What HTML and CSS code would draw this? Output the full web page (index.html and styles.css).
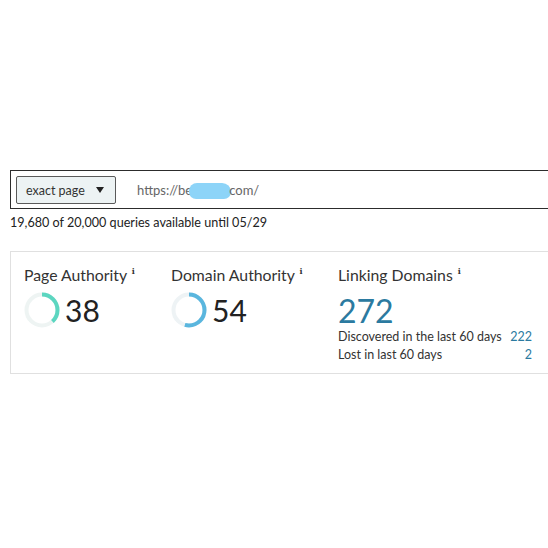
FILE: index.html
```html
<!DOCTYPE html>
<html>
<head>
<meta charset="utf-8">
<link rel="stylesheet" href="styles.css">
</head>
<body>
<div class="page">
  <div class="search">
    <button class="scope">exact page <span class="caret"></span></button>
    <div class="url">https://be<span class="blob"></span>com/</div>
  </div>
  <div class="quota">19,680 of 20,000 queries available until 05/29</div>
  <div class="card">
    <div class="metric">
      <div class="title">Page Authority <sup>i</sup></div>
      <div class="score">
        <svg class="ring" width="36" height="36" viewBox="0 0 36 36">
          <circle cx="18" cy="18" r="15.5" fill="none" stroke="#eef4f3" stroke-width="4"/>
          <circle cx="18" cy="18" r="15.5" fill="none" stroke="#5cd6c0" stroke-width="4" stroke-dasharray="37 100" transform="rotate(-90 18 18)"/>
        </svg>
        <span class="num">38</span>
      </div>
    </div>
    <div class="metric">
      <div class="title">Domain Authority <sup>i</sup></div>
      <div class="score">
        <svg class="ring" width="36" height="36" viewBox="0 0 36 36">
          <circle cx="18" cy="18" r="15.5" fill="none" stroke="#eef3f5" stroke-width="4"/>
          <circle cx="18" cy="18" r="15.5" fill="none" stroke="#5ab6de" stroke-width="4" stroke-dasharray="52.6 100" transform="rotate(-90 18 18)"/>
        </svg>
        <span class="num">54</span>
      </div>
    </div>
    <div class="metric linking">
      <div class="title">Linking Domains <sup>i</sup></div>
      <div class="big">272</div>
      <div class="row"><span>Discovered in the last 60 days</span><span class="val">222</span></div>
      <div class="row"><span>Lost in last 60 days</span><span class="val">2</span></div>
    </div>
  </div>
</div>
</body>
</html>
```
FILE: styles.css
```css
* { box-sizing: border-box; }
html, body { margin: 0; background: #fff; }
body { font-family: Lato, "Noto Sans", sans-serif; color: #222; }
.page { padding: 170px 0 0 10px; }
.search {
  display: flex;
  align-items: center;
  height: 39px;
  border: 1px solid #2c2c2c;
  border-right: none;
  padding: 5px 0 4px 5px;
  margin-right: -2px;
}
.scope {
  display: flex;
  align-items: center;
  width: 100px;
  height: 28px;
  padding: 0 0 0 9px;
  background: #edf3f4;
  border: 1px solid #5a5a5a;
  border-radius: 2px;
  font-family: Lato, sans-serif;
  font-size: 12.5px;
  color: #333;
}
.caret {
  margin-left: 11px;
  width: 0; height: 0;
  border-left: 4.5px solid transparent;
  border-right: 4.5px solid transparent;
  border-top: 6px solid #222;
}
.url {
  margin-left: 21px;
  font-size: 13px;
  color: #666;
  display: flex;
  align-items: center;
}
.blob {
  display: inline-block;
  width: 42px;
  height: 16px;
  margin: 1px -2px 0 -3px;
  background: #8dd4f8;
  border-radius: 9px 10px 8px 8px;
}
.quota {
  font-size: 12.6px;
  color: #222;
  margin-top: 6px;
  line-height: 16px;
}
.card {
  margin-top: 20px;
  height: 123px;
  border: 1px solid #e0e0e0;
  border-right: none;
  margin-right: -2px;
  padding: 9px 0 0 13px;
  display: grid;
  grid-template-columns: 147px 167px 194px;
}
.title {
  font-size: 15.8px;
  color: #333;
  line-height: 20px;
  white-space: nowrap;
}
.title sup {
  font-family: "DejaVu Serif", serif;
  font-size: 8px;
  font-weight: bold;
  vertical-align: 7px;
  margin-left: 1px;
}
.score {
  display: flex;
  align-items: center;
  margin-top: 7px;
}
.ring { display: block; }
.num {
  font-size: 30px;
  color: #222;
  margin-left: 5px;
  line-height: 36px;
}
.big {
  font-size: 32px;
  color: #2b7aa0;
  line-height: 34px;
  margin-top: 9px;
}
.row {
  display: flex;
  justify-content: space-between;
  font-size: 12.5px;
  color: #333;
  line-height: 18px;
}
.row .val { color: #2b7aa0; }
```
